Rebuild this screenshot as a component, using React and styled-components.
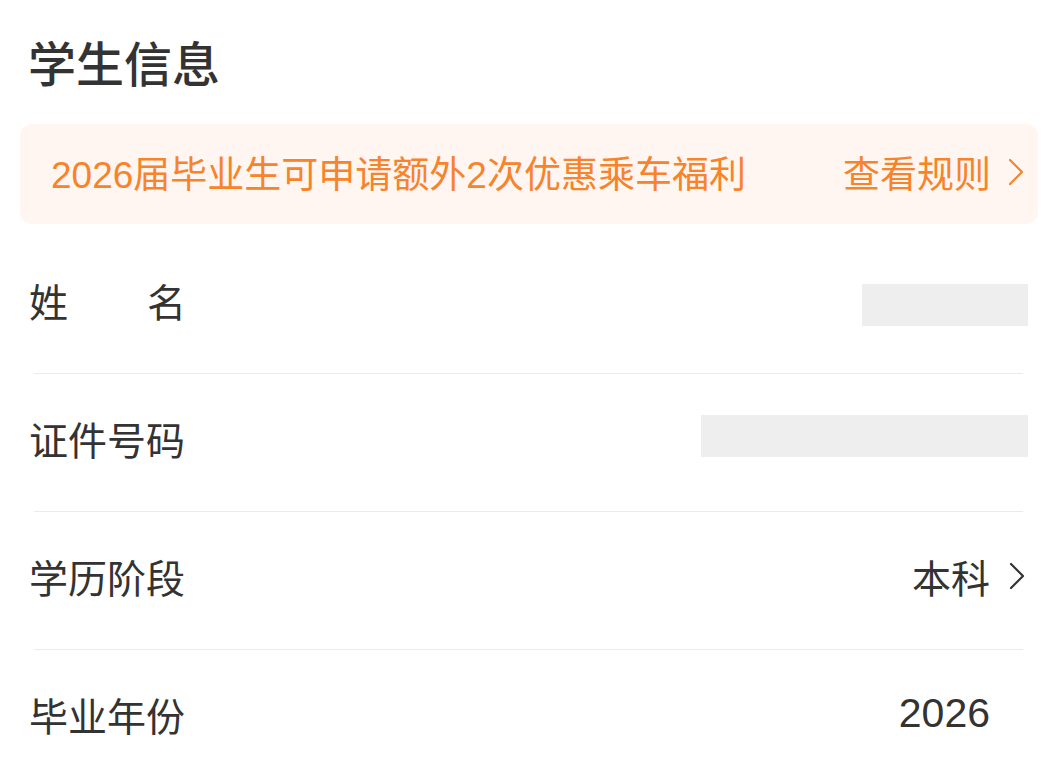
import React from 'react';
import styled, { createGlobalStyle } from 'styled-components';

const GlobalStyle = createGlobalStyle`
  html, body {
    margin: 0;
    padding: 0;
    background: #fff;
  }
  body {
    font-family: "Liberation Sans", "Noto Sans CJK SC", sans-serif;
    color: #333;
  }
`;

const Page = styled.div`
  width: 1060px;
  box-sizing: border-box;
  padding: 0 22px 0 20px;
`;

const Title = styled.h1`
  margin: 0;
  padding: 36px 0 0 8px;
  font-size: 48px;
  line-height: 60px;
  font-weight: 500;
  color: #333;
`;

const Banner = styled.div`
  margin-top: 28px;
  height: 100px;
  box-sizing: border-box;
  padding: 0 11px 4px 31px;
  border-radius: 12px;
  background: #fff6f2;
  color: #f7832b;
  display: flex;
  align-items: center;
  justify-content: space-between;
  font-size: 37px;
`;

const BannerLink = styled.div`
  display: flex;
  align-items: center;
  gap: 16px;
`;

const List = styled.div`
  margin-top: 12px;
  display: flex;
  flex-direction: column;
`;

const Row = styled.div`
  height: 137px;
  box-sizing: border-box;
  padding: 0 10px 10px 9px;
  display: flex;
  align-items: center;
  justify-content: space-between;
  font-size: 39px;
`;

const Label = styled.span`
  width: ${p => (p.$spread ? '157px' : 'auto')};
  text-align-last: ${p => (p.$spread ? 'justify' : 'auto')};
`;

const Value = styled.div`
  display: flex;
  align-items: center;
  gap: 18px;
  color: #333;
  font-size: ${p => (p.$digits ? '41px' : '39px')};
`;

const Masked = styled.div`
  width: ${p => p.$w}px;
  height: 42px;
  background: #eee;
  transform: translateY(${p => p.$shift || 0}px);
`;

const Divider = styled.div`
  height: 1px;
  margin: 0 15px 0 14px;
  background: #ebebeb;
`;

const ChevronBox = styled.span`
  display: inline-flex;
  width: 20px;
  visibility: ${p => (p.$hidden ? 'hidden' : 'visible')};
`;

const Chevron = ({ color = '#333', hidden }) => (
  <ChevronBox $hidden={hidden}>
    <svg width="18" height="28" viewBox="0 0 18 28" fill="none">
      <polyline
        points="3,2 15,14 3,26"
        stroke={color}
        strokeWidth="2.2"
        strokeLinecap="round"
        strokeLinejoin="round"
      />
    </svg>
  </ChevronBox>
);

export default function App() {
  return (
    <Page>
      <GlobalStyle />
      <Title>学生信息</Title>
      <Banner>
        <span>2026届毕业生可申请额外2次优惠乘车福利</span>
        <BannerLink>
          查看规则
          <Chevron color="#f7832b" />
        </BannerLink>
      </Banner>
      <List>
        <Row>
          <Label $spread>姓名</Label>
          <Masked $w={166} $shift={5} />
        </Row>
        <Divider />
        <Row>
          <Label>证件号码</Label>
          <Masked $w={327} $shift={-2} />
        </Row>
        <Divider />
        <Row>
          <Label>学历阶段</Label>
          <Value>
            本科
            <Chevron />
          </Value>
        </Row>
        <Divider />
        <Row>
          <Label>毕业年份</Label>
          <Value $digits>
            2026
            <Chevron hidden />
          </Value>
        </Row>
      </List>
    </Page>
  );
}
